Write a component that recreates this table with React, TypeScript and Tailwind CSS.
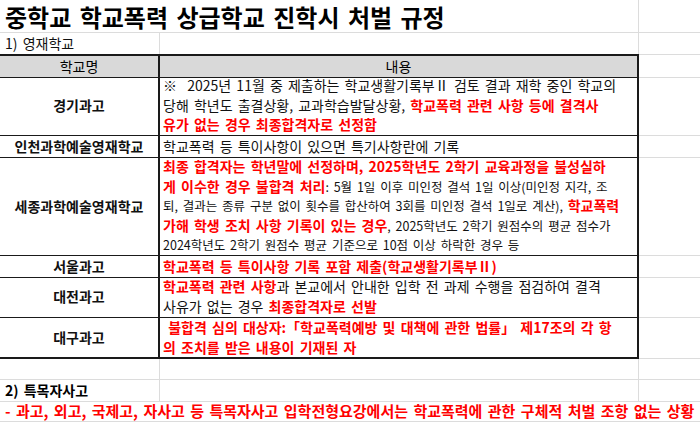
const R = 'text-[#ff0000] font-bold';

function Red({ children }: { children: React.ReactNode }) {
    return <span className={R}>{children}</span>;
}

function Small({ children }: { children: React.ReactNode }) {
    return <span className="text-[12.5px]">{children}</span>;
}

function TableRow({ name, h, lines }: { name: string; h: string; lines: React.ReactNode[] }) {
    return (
        <div className={`grid grid-cols-[160px_479px_61px] ${h}`}>
            <div className="border-r-2 border-b border-[#1a1a1a] flex items-center justify-center font-bold">{name}</div>
            <div className="border-r-2 border-b border-[#1a1a1a] pl-[3px] flex flex-col justify-center leading-[19.5px] overflow-hidden">
                {lines.map((l, i) => (
                    <div key={i} className="whitespace-nowrap">{l}</div>
                ))}
            </div>
            <div className="border-b border-[#dcdcdc]"></div>
        </div>
    );
}

export default function App() {
    return (
        <div className="w-[700px] h-[422px] overflow-hidden bg-white text-[#111] text-[14px] [word-spacing:2px] font-['Noto_Sans_CJK_KR','Noto_Sans',sans-serif]">
            {/* title */}
            <div className="grid grid-cols-[639px_61px] h-[33px]">
                <div className="border-r border-b border-[#dcdcdc] pl-[5px] pt-[1px] flex items-center text-[24px] leading-[28px] font-bold text-black whitespace-nowrap [word-spacing:3px]">
                    <span>중학교 학교폭력 상급학교 진학시 처벌 규정</span>
                </div>
                <div className="border-b border-[#dcdcdc]"></div>
            </div>
            <div className="grid grid-cols-[160px_479px_61px] h-[21px]">
                <div className="border-r border-b border-[#dcdcdc] pl-[5px] flex items-center whitespace-nowrap">1) 영재학교</div>
                <div className="border-r border-b border-[#dcdcdc]"></div>
                <div className="border-b border-[#dcdcdc]"></div>
            </div>
            {/* header */}
            <div className="grid grid-cols-[160px_479px_61px] h-[22px]">
                <div className="bg-[#d9d9d9] border-t-2 border-r-2 border-b border-[#1a1a1a] flex items-center justify-center text-black">학교명</div>
                <div className="bg-[#d9d9d9] border-t-2 border-r-2 border-b border-[#1a1a1a] flex items-center justify-center text-black">내용</div>
                <div className="border-b border-[#dcdcdc]"></div>
            </div>
            <TableRow
                name="경기과고"
                h="h-[60px]"
                lines={[
                    <>※&nbsp; 2025년 11월 중 제출하는 학교생활기록부Ⅱ 검토 결과 재학 중인 학교의</>,
                    <>당해 학년도 출결상황, 교과학습발달상황, <Red>학교폭력 관련 사항 등에 결격사</Red></>,
                    <Red>유가 없는 경우 최종합격자로 선정함</Red>,
                ]}
            />
            <TableRow name="인천과학예술영재학교" h="h-[21px]" lines={[<>학교폭력 등 특이사항이 있으면 특기사항란에 기록</>]} />
            <TableRow
                name="세종과학예술영재학교"
                h="h-[99px]"
                lines={[
                    <Red>최종 합격자는 학년말에 선정하며, 2025학년도 2학기 교육과정을 불성실하</Red>,
                    <><Red>게 이수한 경우 불합격 처리</Red><Small>: 5월 1일 이후 미인정 결석 1일 이상(미인정 지각, 조</Small></>,
                    <><Small>퇴, 결과는 종류 구분 없이 횟수를 합산하여 3회를 미인정 결석 1일로 계산), </Small><Red>학교폭력</Red></>,
                    <><Red>가해 학생 조치 사항 기록이 있는 경우</Red><Small>, 2025학년도 2학기 원점수의 평균 점수가</Small></>,
                    <Small>2024학년도 2학기 원점수 평균 기준으로 10점 이상 하락한 경우 등</Small>,
                ]}
            />
            <TableRow name="서울과고" h="h-[20px]" lines={[<Red>학교폭력 등 특이사항 기록 포함 제출(학교생활기록부Ⅱ)</Red>]} />
            <TableRow
                name="대전과고"
                h="h-[42px]"
                lines={[
                    <><Red>학교폭력 관련 사항</Red>과 본교에서 안내한 입학 전 과제 수행을 점검하여 결격</>,
                    <>사유가 없는 경우 <Red>최종합격자로 선발</Red></>,
                ]}
            />
            <div className="grid grid-cols-[160px_479px_61px] h-[41px]">
                <div className="border-r-2 border-b-2 border-[#1a1a1a] flex items-center justify-center font-bold">대구과고</div>
                <div className="border-r-2 border-b-2 border-[#1a1a1a] pl-[3px] flex flex-col justify-center leading-[19.5px] overflow-hidden">
                    <div className="whitespace-nowrap"><Red>&nbsp;불합격 심의 대상자:「학교폭력예방 및 대책에 관한 법률」 제17조의 각 항</Red></div>
                    <div className="whitespace-nowrap"><Red>의 조치를 받은 내용이 기재된 자</Red></div>
                </div>
                <div className="border-b border-[#dcdcdc]"></div>
            </div>
            {/* after table */}
            <div className="grid grid-cols-[160px_479px_61px] h-[21px]">
                <div className="border-r border-b border-[#dcdcdc]"></div>
                <div className="border-r border-b border-[#dcdcdc]"></div>
                <div className="border-b border-[#dcdcdc]"></div>
            </div>
            <div className="grid grid-cols-[160px_479px_61px] h-[21px]">
                <div className="border-r border-b border-[#dcdcdc] pl-[5px] flex items-center font-bold text-black whitespace-nowrap">2) 특목자사고</div>
                <div className="border-r border-b border-[#dcdcdc]"></div>
                <div className="border-b border-[#dcdcdc]"></div>
            </div>
            <div className="h-[21px] border-b border-[#dcdcdc] pl-[5px] flex items-center whitespace-nowrap text-[15px] [word-spacing:2px]">
                <Red>- 과고, 외고, 국제고, 자사고 등 특목자사고 입학전형요강에서는 학교폭력에 관한 구체적 처벌 조항 없는 상황</Red>
            </div>
        </div>
    );
}
